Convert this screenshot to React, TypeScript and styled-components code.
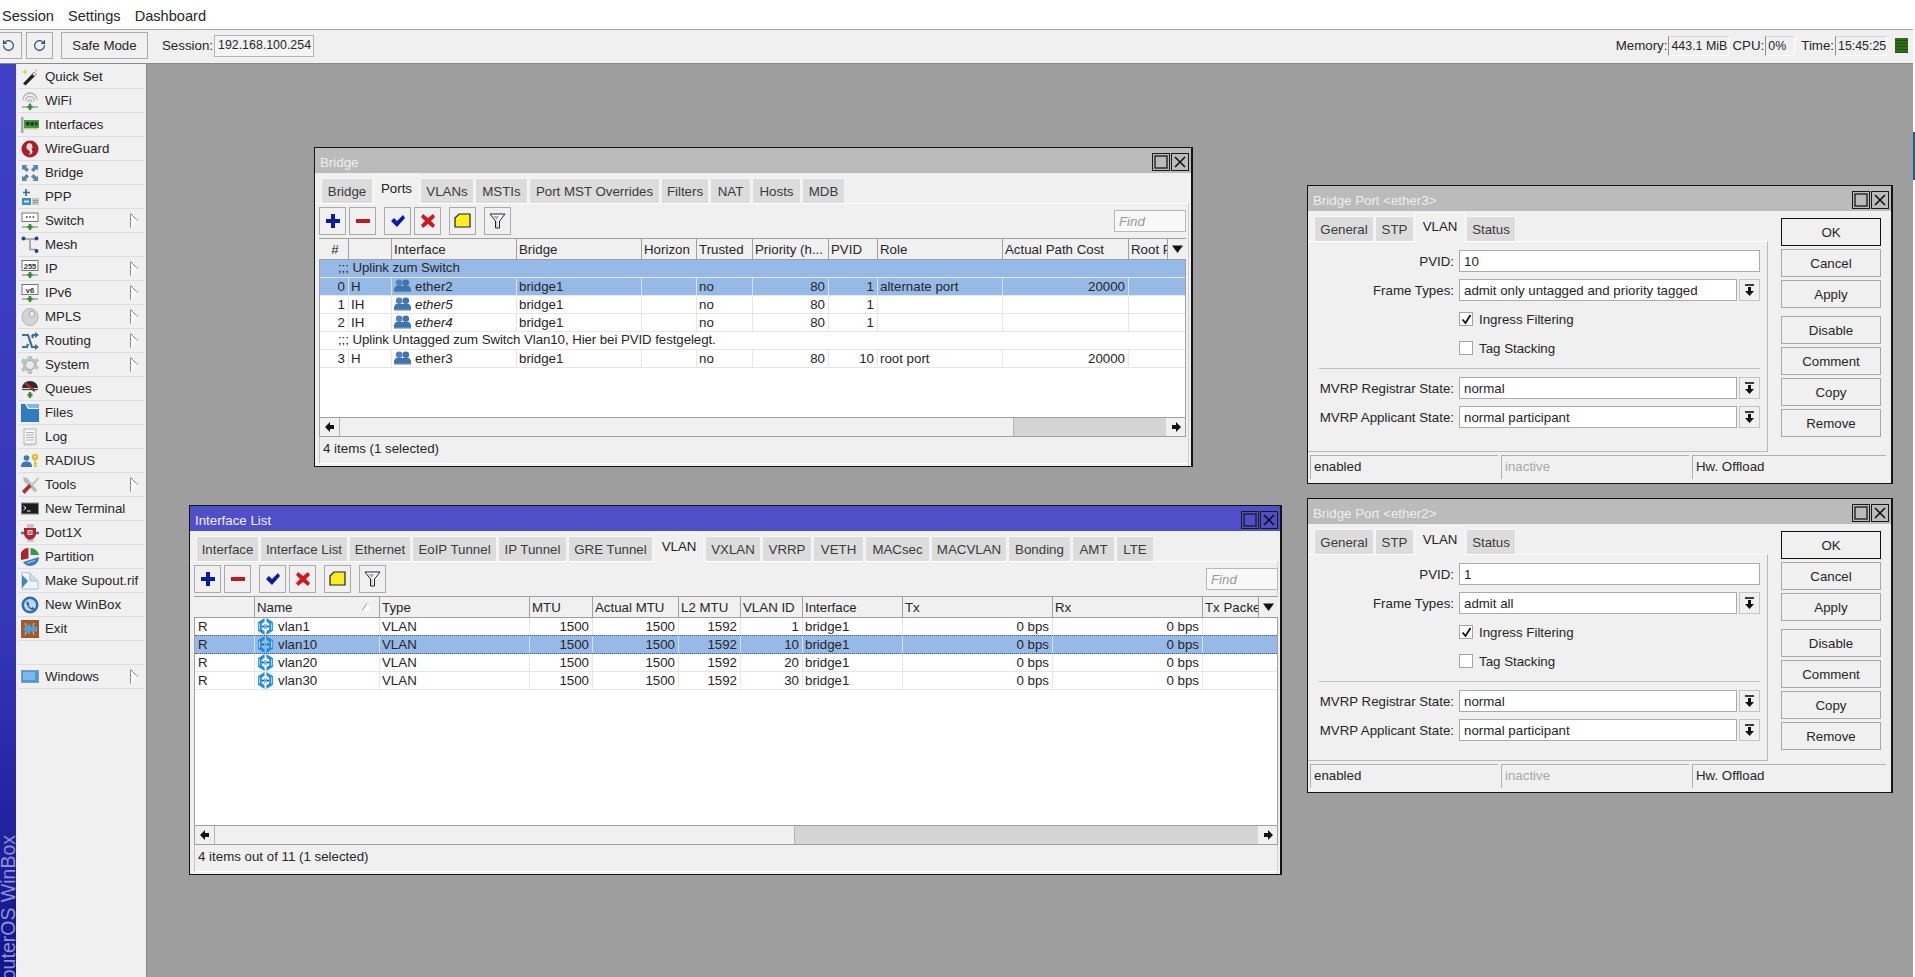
import React from "react";
import styled, { createGlobalStyle } from "styled-components";
import { RotateCcw, RotateCw } from "lucide-react";

const GlobalStyle = createGlobalStyle`
  html, body {
    margin: 0;
    padding: 0;
    background: #fff;
    overflow: hidden;
  }
  * { box-sizing: border-box; }
  body {
    font-family: "Liberation Sans", Arial, sans-serif;
    font-size: 13.3px;
    color: #262626;
  }
`;

const Page = styled.div`
  display: flex;
  width: 1915px;
  height: 977px;
  overflow: hidden;
`;

const Frame = styled.div`
  flex: 1;
  min-width: 0;
  display: flex;
  flex-direction: column;
`;

const EdgeStrip = styled.div`
  width: 2px;
  padding-top: 132px;
  background: #fff;
`;

const EdgeMark = styled.div`
  height: 48px;
  background: #1f5f8f;
`;

const MenuBar = styled.div`
  height: 30px;
  flex: none;
  display: flex;
  align-items: center;
  gap: 14px;
  padding: 3px 0 0 2px;
  background: #fff;
  border-bottom: 1px solid #a8a8a8;
  font-size: 14.6px;
`;

const TopBar = styled.div`
  height: 34px;
  flex: none;
  display: flex;
  align-items: center;
  padding: 0 5px 2px 0;
  background: #f0f0f0;
  border-bottom: 1px solid #8a8a8a;
`;

const TopButton = styled.div<{ $w: number; $after?: number }>`
  width: ${(p) => p.$w}px;
  height: 27px;
  flex: none;
  display: flex;
  align-items: center;
  justify-content: center;
  margin-right: ${(p) => p.$after ?? 4}px;
  border: 1px solid #ababab;
  background: #f0f0f0;
  color: #1d3b7a;
  &:first-child { margin-left: -5px; }
`;

const SafeButton = styled(TopButton)`
  color: #262626;
`;

const TopLabel = styled.span<{ $before?: number }>`
  margin-left: ${(p) => p.$before ?? 0}px;
  margin-right: 1px;
`;

const SessionField = styled.div`
  width: 100px;
  height: 22px;
  line-height: 19px;
  padding-left: 3px;
  font-size: 12.4px;
  border: 1px solid #b4b4b4;
  background: #f4f4f4;
  white-space: nowrap;
`;

const InfoGroup = styled.div`
  margin-left: auto;
  display: flex;
  align-items: center;
`;

const InfoField = styled.div<{ $w: number; $after?: number }>`
  width: ${(p) => p.$w}px;
  height: 20px;
  line-height: 18px;
  padding-left: 2px;
  font-size: 12.4px;
  margin-right: ${(p) => p.$after ?? 6}px;
  border-left: 1px solid #8e8e8e;
  border-top: 1px solid #d4d4d4;
  border-right: 1px solid #fff;
  border-bottom: 1px solid #fff;
  white-space: nowrap;
`;

const Led = styled.div`
  width: 13px;
  height: 15px;
  margin-left: 2px;
  background: repeating-linear-gradient(#2f6b1a 0 2px, #23540f 2px 3px);
`;

const Workspace = styled.div`
  flex: 1;
  min-height: 0;
  display: flex;
`;

const SideStrip = styled.div`
  width: 16px;
  flex: none;
  display: flex;
  flex-direction: column;
  justify-content: flex-end;
  align-items: center;
  overflow: hidden;
  background: linear-gradient(#4040c4, #3535b8 62%, #13138c);
`;

const SideTitle = styled.div`
  writing-mode: vertical-rl;
  transform: rotate(180deg);
  flex: none;
  margin-bottom: -17px;
  font-size: 19.5px;
  line-height: 16px;
  white-space: nowrap;
  color: #8c92d2;
`;

const SidePanel = styled.nav`
  width: 131px;
  flex: none;
  padding: 1px 2px 0 2px;
  background: #f0f0f0;
  border-right: 1px solid #8a8a8a;
`;

const MenuRow = styled.div`
  height: 24px;
  display: flex;
  align-items: center;
  gap: 6px;
  padding-left: 3px;
  border-bottom: 1px solid #dedede;
  white-space: nowrap;
`;

const SubArrow = styled.svg`
  margin-left: auto;
  margin-right: 6px;
  flex: none;
`;

const Desktop = styled.main`
  flex: 1;
  position: relative;
  background: #9e9e9e;
`;

const Win = styled.section<{ $x: number; $y: number; $w: number; $h: number }>`
  position: absolute;
  left: ${(p) => p.$x}px;
  top: ${(p) => p.$y}px;
  width: ${(p) => p.$w}px;
  height: ${(p) => p.$h}px;
  display: flex;
  flex-direction: column;
  background: #f0f0f0;
  border: 1px solid #141414;
  border-right-width: 2px;
`;

const TitleBar = styled.header<{ $active?: boolean }>`
  height: 25px;
  flex: none;
  display: flex;
  align-items: center;
  justify-content: space-between;
  padding: 3px 2px 0 5px;
  background: ${(p) => (p.$active ? "#4f4fc8" : "#bbbbbb")};
  color: ${(p) => (p.$active ? "#f0f0ff" : "#eeeeee")};
`;

const TitleButtons = styled.div`
  display: flex;
  gap: 1px;
`;

const TitleButton = styled.div`
  width: 18px;
  height: 18px;
  display: flex;
  align-items: center;
  justify-content: center;
  border: 1px solid #1a1a1a;
`;

const TabRow = styled.div`
  height: 28px;
  flex: none;
  margin-top: 2px;
  display: flex;
  align-items: flex-end;
  gap: 1px;
  padding-left: 6px;
  position: relative;
  z-index: 1;
`;

const Tab = styled.div<{ $w: number; $on?: boolean }>`
  width: ${(p) => p.$w}px;
  height: ${(p) => (p.$on ? 29 : 25)}px;
  flex: none;
  display: flex;
  align-items: center;
  justify-content: center;
  white-space: nowrap;
  color: ${(p) => (p.$on ? "#222" : "#3a3a3a")};
  background: ${(p) => (p.$on ? "#f0f0f0" : "#dcdcdc")};
  border: 1px solid #f6f6f6;
  border-bottom: none;
  padding-bottom: ${(p) => (p.$on ? 4 : 0)}px;
  margin-bottom: ${(p) => (p.$on ? -1 : 0)}px;
`;

const ListPanel = styled.div`
  flex: 1;
  min-height: 0;
  display: flex;
  flex-direction: column;
  margin-right: 2px;
  border-top: 1px solid #fff;
  border-right: 1px solid #d0d0d0;
`;

const ListBody = styled.div`
  flex: 1;
  min-height: 0;
  width: max-content;
  display: flex;
  flex-direction: column;
  margin-left: 4px;
`;

const ToolRow = styled.div`
  height: 28px;
  flex: none;
  margin-top: 3px;
  display: flex;
  align-items: center;
`;

const ToolButton = styled.div<{ $after?: number }>`
  width: 27px;
  height: 28px;
  flex: none;
  display: flex;
  align-items: center;
  justify-content: center;
  margin-right: ${(p) => p.$after ?? 3}px;
  border: 1px solid #aaaaaa;
  background: #f0f0f0;
`;

const FindBox = styled.div`
  margin-left: auto;
  width: 72px;
  height: 22px;
  line-height: 21px;
  padding-left: 4px;
  font-style: italic;
  color: #9a9a9a;
  background: #f8f8f8;
  border: 1px solid #b8b8b8;
`;

const Table = styled.div`
  flex: 1;
  min-height: 0;
  margin-top: 3px;
  display: flex;
  flex-direction: column;
  background: #fff;
  border-left: 1px solid #a0a0a0;
  border-right: 1px solid #a0a0a0;
  border-bottom: 1px solid #a0a0a0;
`;

const HeadRow = styled.div<{ $cols: string }>`
  height: 22px;
  flex: none;
  display: grid;
  grid-template-columns: ${(p) => p.$cols};
  margin-left: -1px;
  margin-right: -1px;
  background: #f0f0f0;
  border-top: 1px solid #a0a0a0;
  border-bottom: 1px solid #a0a0a0;
`;

const HeadCell = styled.div<{ $center?: boolean }>`
  position: relative;
  padding: 0 0 0 2px;
  line-height: 21px;
  overflow: hidden;
  white-space: nowrap;
  text-align: ${(p) => (p.$center ? "center" : "left")};
  border-left: 1px solid #a0a0a0;
  &:first-child { border-left-color: transparent; }
`;

const SortMark = styled.svg`
  position: absolute;
  right: 8px;
  top: 5px;
`;

const MoreCell = styled(HeadCell)`
  display: flex;
  align-items: center;
  justify-content: center;
  padding: 0;
`;

const Rows = styled.div`
  flex: 1;
  min-height: 0;
`;

const Row = styled.div<{ $cols?: string; $sel?: boolean; $dotted?: boolean }>`
  display: ${(p) => (p.$cols ? "grid" : "block")};
  grid-template-columns: ${(p) => p.$cols ?? "none"};
  line-height: 16px;
  white-space: nowrap;
  background: ${(p) => (p.$sel ? "#97b9e7" : "#fff")};
  border-bottom: 1px ${(p) => (p.$dotted ? "dotted #4a5a74" : "solid #e6e6e6")};
  border-top: ${(p) => (p.$dotted ? "1px dotted #4a5a74" : "none")};
  margin-top: ${(p) => (p.$dotted ? -1 : 0)}px;
  height: ${(p) => (p.$dotted ? 19 : 18)}px;
`;

const CommentText = styled.div`
  padding-left: 18px;
  letter-spacing: -0.08px;
`;

const Cell = styled.div<{ $right?: boolean; $sel?: boolean; $italic?: boolean }>`
  display: flex;
  align-items: center;
  justify-content: ${(p) => (p.$right ? "flex-end" : "flex-start")};
  gap: 4px;
  padding: 0 3px 0 2px;
  overflow: hidden;
  font-style: ${(p) => (p.$italic ? "italic" : "normal")};
  border-left: 1px solid ${(p) => (p.$sel ? "#d4e2f6" : "#e6e6e6")};
  &:first-child { border-left-color: transparent; }
`;

const ScrollBar = styled.div`
  height: 19px;
  flex: none;
  display: flex;
  background: #d4d4d4;
  border-top: 1px solid #a0a0a0;
`;

const ScrollStep = styled.div`
  width: 19px;
  flex: none;
  display: flex;
  align-items: center;
  justify-content: center;
  background: #f0f0f0;
`;

const ScrollThumb = styled.div<{ $w: number }>`
  width: ${(p) => p.$w}px;
  flex: none;
  background: #f0f0f0;
  border-left: 1px solid #b4b4b4;
  border-right: 1px solid #b4b4b4;
`;

const ScrollGap = styled.div`
  flex: 1;
`;

const ListStatus = styled.div`
  height: 27px;
  flex: none;
  line-height: 23px;
  padding-left: 3px;
  margin: 0 0 2px 0;
  border-left: 1px solid #c4c4c4;
  border-bottom: 1px solid #fff;
`;

const FormLayout = styled.div`
  flex: 1;
  min-height: 0;
  display: flex;
`;

const FormLeft = styled.div`
  width: 460px;
  flex: none;
  display: flex;
  flex-direction: column;
`;

const FormPanel = styled.div`
  flex: 1;
  min-height: 0;
  padding: 8px 7px 0 0;
  display: flex;
  flex-direction: column;
  gap: 7px;
  border-top: 1px solid #fff;
  border-right: 1px solid #b8b8b8;
  border-bottom: 1px solid #b8b8b8;
`;

const FormRow = styled.div`
  height: 22px;
  flex: none;
  display: grid;
  grid-template-columns: 146px 1fr;
  column-gap: 5px;
  align-items: center;
`;

const FormLabel = styled.div`
  text-align: right;
  white-space: nowrap;
`;

const ComboWrap = styled.div`
  display: flex;
  gap: 2px;
  height: 22px;
`;

const FieldBox = styled.div`
  flex: 1;
  height: 22px;
  line-height: 21px;
  padding-left: 4px;
  background: #fff;
  border: 1px solid #ababab;
  white-space: nowrap;
`;

const ComboButton = styled.div`
  width: 21px;
  flex: none;
  display: flex;
  align-items: center;
  justify-content: center;
  border: 1px solid #c4c4c4;
  background: #f0f0f0;
`;

const CheckRow = styled.div`
  display: flex;
  align-items: center;
  gap: 6px;
`;

const CheckBox = styled.div`
  width: 14px;
  height: 14px;
  flex: none;
  display: flex;
  align-items: center;
  justify-content: center;
  background: #fff;
  border: 1px solid #a4a4a4;
`;

const Divider = styled.div`
  height: 1px;
  flex: none;
  margin: 2px 0 1px 11px;
  background: #c0c0c0;
`;

const ButtonColumn = styled.div`
  width: 100px;
  flex: none;
  margin: 7px 0 0 13px;
  display: flex;
  flex-direction: column;
  gap: 3px;
`;

const FormButton = styled.div<{ $main?: boolean; $split?: boolean }>`
  height: 28px;
  flex: none;
  display: flex;
  align-items: center;
  justify-content: center;
  margin-top: ${(p) => (p.$split ? 5 : 0)}px;
  background: #f0f0f0;
  border: 1px solid ${(p) => (p.$main ? "#111" : "#a8a8a8")};
`;

const FormStatus = styled.div`
  height: 24px;
  flex: none;
  margin: 3px 0 4px 2px;
  display: grid;
  grid-template-columns: 188px 188px 194px;
  column-gap: 3px;
`;

const StatusCell = styled.div<{ $dim?: boolean }>`
  line-height: 22px;
  padding-left: 3px;
  color: ${(p) => (p.$dim ? "#a8a8a8" : "#262626")};
  border-left: 1px solid #b0b0b0;
  border-top: 1px solid #b0b0b0;
`;

const IconSvg = styled.svg`
  flex: none;
`;

const StepIcon = styled.svg<{ $flip?: boolean }>`
  transform: ${(p) => (p.$flip ? "scaleX(-1)" : "none")};
`;

type IconProps = { children: React.ReactNode; size?: number };

const Ico = ({ children, size = 18 }: IconProps) => (
  <IconSvg width={size} height={size} viewBox="0 0 18 18">
    {children}
  </IconSvg>
);

const NetBase = () => (
  <>
    <path d="M1 15h16" stroke="#8a8a8a" strokeWidth="1.2" />
    <path d="M9 12v6M6.500 15h5" stroke="#2f8f2f" strokeWidth="2.4" />
  </>
);

const menuIcons: Record<string, React.ReactNode> = {
  wand: (
    <>
      <path d="M2 15.500 12 5l2.500 2.500L4.500 17.500z" fill="#222" />
      <path d="M11 6l2-2 2.500 2.500-2 2z" fill="#d8d8d8" stroke="#555" strokeWidth=".5" />
      <path d="M4 1l.8 2.200L7 4l-2.200.8L4 7l-.8-2.200L1 4l2.200-.8z" fill="#d4d820" />
      <circle cx="15" cy="2.500" r="1" fill="#c8cc30" />
    </>
  ),
  wifi: (
    <>
      <path d="M2 8a7 7 0 0 1 14 0M4.500 9a4.500 4.500 0 0 1 9 0M7 10a2 2 0 0 1 4 0" fill="none" stroke="#b4b4b4" strokeWidth="1.3" />
      <path d="M9 10v3" stroke="#a0a0a0" />
      <NetBase />
    </>
  ),
  card: (
    <>
      <rect x="0" y="1" width="2.500" height="16" fill="#a8a8a8" />
      <rect x="3" y="4" width="15" height="8" fill="#3f9a3a" />
      <rect x="5" y="6" width="3.500" height="3.500" fill="#1f3f24" />
      <rect x="9.500" y="6" width="3.500" height="3.500" fill="#1f3f24" />
      <rect x="14" y="6" width="2.500" height="3.500" fill="#1f3f24" />
      <path d="M4 12v1.500M6 12v1.500M8 12v1.500M10 12v1.500M12 12v1.500M14 12v1.500M16 12v1.500" stroke="#c4a030" />
    </>
  ),
  wireguard: (
    <>
      <circle cx="9" cy="9" r="8.500" fill="#a81e2a" />
      <path d="M7 3.500c3-1 5 1 4 3l1.500 1-2 .5 1 3.500c0 2-2 3.500-4 3 1.500-1 2-2 1-3.500L6 9c-1-2-.5-4.500 1-5.500z" fill="#f0dcdc" />
    </>
  ),
  bridge: (
    <path
      d="M1 1h5.500L5 2.500 8 5.500 5.500 8 2.500 5 1 6.500zM17 1v5.500L15.500 5l-3 3L10 5.500l3-3L11.500 1zM1 17v-5.500L2.500 13l3-3L8 12.500l-3 3L6.500 17zM17 17h-5.500l1.500-1.500-3-3 2.500-2.500 3 3 1.500-1.500z"
      fill="#5a86aa"
    />
  ),
  ppp: (
    <>
      <path d="M5 1v7M2 4.500h7" stroke="#3a6a90" strokeWidth="1.600" />
      <rect x="1" y="10" width="9" height="7" fill="#3d8ccb" />
      <rect x="3" y="12.500" width="5" height="2" fill="#cfe6f8" />
      <rect x="11" y="10" width="7" height="7" fill="#c6c6c6" />
      <path d="M12 12.500h5M12 14.500h5" stroke="#8c9a8c" />
    </>
  ),
  switch: (
    <>
      <rect x="1" y="1" width="16" height="8.500" fill="#fff" stroke="#777" />
      <path d="M5 5h1.500M8.300 5h1.500M11.600 5h1.500" stroke="#333" strokeWidth="1.500" />
      <NetBase />
    </>
  ),
  mesh: (
    <>
      <path d="M2 3h14M9 3v10.500h6" fill="none" stroke="#999" strokeWidth="1.600" />
      <circle cx="2.500" cy="2.500" r="2" fill="#2a3f9a" />
      <circle cx="15.500" cy="2.500" r="2" fill="#2a3f9a" />
      <circle cx="15.500" cy="15" r="2" fill="#2a3f9a" />
    </>
  ),
  ip: (
    <>
      <rect x="1" y="0.500" width="16" height="10" fill="#fff" stroke="#777" />
      <text x="9" y="8.500" fontSize="7.500" textAnchor="middle" fontFamily="Liberation Sans" fontWeight="700" fill="#333">255</text>
      <NetBase />
    </>
  ),
  ipv6: (
    <>
      <rect x="1" y="0.500" width="16" height="10" fill="#fff" stroke="#777" />
      <text x="9" y="8.500" fontSize="7.500" textAnchor="middle" fontFamily="Liberation Sans" fontWeight="700" fill="#333">v6</text>
      <NetBase />
    </>
  ),
  mpls: (
    <>
      <ellipse cx="9" cy="9" rx="8" ry="8.500" fill="#d4d4d4" stroke="#b0b0b0" />
      <ellipse cx="11" cy="6" rx="2.500" ry="3" fill="#efefef" stroke="#a8a8a8" />
    </>
  ),
  routing: (
    <>
      <path d="M1 3h6l4 12h5M1 15h5l1-3M11 3h5M12 6l-1-3" fill="none" stroke="#3e6e94" strokeWidth="2.200" />
      <path d="M14 0l4 3-4 3zM14 12l4 3-4 3z" fill="#3e6e94" />
    </>
  ),
  system: (
    <>
      <path d="M7 0h4l.5 2.500 2.500 1 2-1.500 2 3-2 1.500v3l2 1.500-2 3-2-1.500-2.500 1L11 18H7l-.5-2.500-2.500-1-2 1.500-2-3 2-1.500v-3L0 5l2-3 2 1.500 2.500-1z" fill="#bdc4bd" />
      <circle cx="9" cy="9" r="4.500" fill="#ebebeb" stroke="#a8b0a8" />
    </>
  ),
  queues: (
    <>
      <path d="M1 8a8 7 0 0 1 16 0z" fill="#2c2c2c" />
      <path d="M4 3l10 8" stroke="#b82a34" strokeWidth="2.400" />
      <path d="M1 9.500h16" stroke="#444" strokeWidth="1.200" />
      <path d="M9 12v6M6.500 15h5" stroke="#2f8f2f" strokeWidth="2.400" />
    </>
  ),
  folder: (
    <>
      <path d="M0 0h4l3 5h11v13H0z" fill="#2f7cc0" />
      <path d="M5.500 0H18v4H8z" fill="#7fb8e4" />
    </>
  ),
  log: (
    <>
      <rect x="3" y="1" width="12" height="15" fill="#f6f6f6" stroke="#b4b4b4" />
      <path d="M5 4.500h8M5 7h8M5 9.500h8M5 12h8" stroke="#b4b4b4" />
      <path d="M4 16v2M7 16v2M10 16v2M13 16v2" stroke="#b4b4b4" />
    </>
  ),
  radius: (
    <>
      <circle cx="5.500" cy="6" r="2.800" fill="#3a78b8" />
      <path d="M0 15c0-4 2-5.500 5.500-5.500S11 11 11 15z" fill="#3a78b8" />
      <circle cx="14" cy="5" r="3.200" fill="#e0c028" />
      <circle cx="14" cy="4.500" r="1" fill="#f8f0c0" />
      <path d="M14 8v7M14 11.500h2M14 14h2" stroke="#e0c028" strokeWidth="1.500" />
    </>
  ),
  tools: (
    <>
      <path d="M2 1l4 1 10 12-2 2.500L3 5.500z" fill="#b8b8b8" />
      <path d="M17 1l-7 7.500 1.500 1.500L18 3z" fill="#c4c4c4" />
      <path d="M1 15l7-7 2.500 2.500-7 7.500z" fill="#b02a34" />
    </>
  ),
  terminal: (
    <>
      <rect x="0.500" y="3" width="17" height="11" fill="#1c1c1c" stroke="#8a8a8a" />
      <path d="M2.500 6l2.500 2-2.500 2" fill="none" stroke="#fff" />
      <path d="M6 11h3.500" stroke="#fff" />
    </>
  ),
  dot1x: (
    <>
      <rect x="6" y="0" width="7" height="18" fill="#c8c8c8" />
      <path d="M0 9h4M14 9h4" stroke="#3a78b8" strokeWidth="2.500" />
      <path d="M3 4h12v5c0 4-3 6-6 7-3-1-6-3-6-7z" fill="#b0222e" />
      <rect x="6.500" y="6" width="5" height="5" fill="#f4d8dc" />
      <path d="M7.500 7l3 3M10.500 7l-3 3" stroke="#b0222e" />
    </>
  ),
  partition: (
    <>
      <path d="M7.500 0v10.500L0 12V5C1 2 4 0 7.500 0z" fill="#b0222e" />
      <path d="M9.500 0c4 0 7.500 3 8.500 7H9.500z" fill="#2f9a4a" />
      <path d="M2 14l16-5c0 5-4 9-9 9-3 0-5-1.500-7-4z" fill="#3a7cc0" />
      <path d="M6 15l8-2.500" stroke="#bcd8f0" />
    </>
  ),
  supout: (
    <>
      <path d="M1 0l8 1 8 8v8H1z" fill="#eef4fa" stroke="#a8c0d4" />
      <path d="M1 3l6 6-6 7z" fill="#3a88c0" />
      <path d="M9 1v8h8" fill="#c8dcec" stroke="#a8c0d4" />
    </>
  ),
  winbox: (
    <>
      <circle cx="9" cy="9" r="8.500" fill="#2d6fae" />
      <circle cx="9" cy="9" r="6" fill="#bcd6ee" />
      <path d="M6 5c-1 2 0 5 2 7s5 2.500 6 1l-2.500-2-1 1c-1 0-3-2-3-3l1-1z" fill="#1f5a96" />
    </>
  ),
  exit: (
    <>
      <rect width="18" height="18" fill="#a05a2c" />
      <path d="M4 3l2 6-2 6M13 3l-2 6 2 6" stroke="#e0c0a0" fill="none" />
      <path d="M2 9l7-6v3.500h7v5H9V15z" fill="#49a0dc" />
    </>
  ),
  windows: (
    <>
      <rect x="0.500" y="2.500" width="17" height="12" fill="#4b9ad8" stroke="#8a9aa8" />
      <rect x="2" y="4" width="12" height="8" fill="#78b8ea" />
    </>
  ),
};

const sideMenu: { label: string; icon?: string; more?: boolean }[] = [
  { label: "Quick Set", icon: "wand" },
  { label: "WiFi", icon: "wifi" },
  { label: "Interfaces", icon: "card" },
  { label: "WireGuard", icon: "wireguard" },
  { label: "Bridge", icon: "bridge" },
  { label: "PPP", icon: "ppp" },
  { label: "Switch", icon: "switch", more: true },
  { label: "Mesh", icon: "mesh" },
  { label: "IP", icon: "ip", more: true },
  { label: "IPv6", icon: "ipv6", more: true },
  { label: "MPLS", icon: "mpls", more: true },
  { label: "Routing", icon: "routing", more: true },
  { label: "System", icon: "system", more: true },
  { label: "Queues", icon: "queues" },
  { label: "Files", icon: "folder" },
  { label: "Log", icon: "log" },
  { label: "RADIUS", icon: "radius" },
  { label: "Tools", icon: "tools", more: true },
  { label: "New Terminal", icon: "terminal" },
  { label: "Dot1X", icon: "dot1x" },
  { label: "Partition", icon: "partition" },
  { label: "Make Supout.rif", icon: "supout" },
  { label: "New WinBox", icon: "winbox" },
  { label: "Exit", icon: "exit" },
  { label: "" },
  { label: "Windows", icon: "windows", more: true },
];

const PortIcon = () => (
  <Ico size={17}>
    <path d="M1.500 8.500h15V12h-15z" fill="#4a7fb5" />
    <circle cx="5.500" cy="5" r="3.500" fill="#4f82b8" />
    <circle cx="12.500" cy="5" r="3.500" fill="#3f74aa" />
    <path d="M0 15v-3c0-2 2-3.500 5.500-3.500h7C16 8.500 18 10 18 12v3z" fill="#3f74ac" />
    <path d="M0 15h18" stroke="#8fb2d4" strokeWidth="1.200" />
  </Ico>
);

const VlanIcon = () => (
  <Ico size={17}>
    <path d="M8 0L1 4.500v9L8 18v-4L5 12V6l3-2z" fill="#1f8fe4" />
    <path d="M10 0l7 4.500v9L10 18v-4l3-2V6l-3-2z" fill="#1f8fe4" />
    <path d="M2.500 5.500v7M15.500 5.500v7" stroke="#a8dcf8" strokeWidth="1.200" />
    <path d="M5 9h8" stroke="#1a5a9c" strokeWidth="1.800" />
    <path d="M8 6v6M10 6v6" stroke="#6fb8ec" strokeWidth="1.200" />
  </Ico>
);

const TitleControls = () => (
  <TitleButtons>
    <TitleButton>
      <svg width="14" height="14" viewBox="0 0 14 14">
        <rect x="1" y="1" width="12" height="12" fill="none" stroke="#222" strokeWidth="1.400" />
      </svg>
    </TitleButton>
    <TitleButton>
      <svg width="14" height="14" viewBox="0 0 14 14">
        <path d="M2 2l10 10M12 2L2 12" stroke="#111" strokeWidth="1.600" />
      </svg>
    </TitleButton>
  </TitleButtons>
);

const ListTools = () => (
  <ToolRow>
    <ToolButton>
      <svg width="16" height="16" viewBox="0 0 16 16">
        <path d="M6 1h4v5h5v4h-5v5H6v-5H1V6h5z" fill="#0a1aa8" />
      </svg>
    </ToolButton>
    <ToolButton $after={8}>
      <svg width="16" height="16" viewBox="0 0 16 16">
        <rect x="1" y="6" width="14" height="4" fill="#b81c24" />
      </svg>
    </ToolButton>
    <ToolButton>
      <svg width="16" height="16" viewBox="0 0 16 16">
        <path d="M1 8l3-3 3 3 6-6 2 3-8 9z" fill="#0a1aa8" />
      </svg>
    </ToolButton>
    <ToolButton $after={8}>
      <svg width="16" height="16" viewBox="0 0 16 16">
        <path d="M3 1l5 4 5-4 2 3-4 4 4 4-2 3-5-4-5 4-2-3 4-4-4-4z" fill="#d01820" />
      </svg>
    </ToolButton>
    <ToolButton $after={8}>
      <svg width="17" height="16" viewBox="0 0 17 16">
        <path d="M1 5l4-4h11v13H1z" fill="#f6f020" stroke="#222" strokeWidth="1.200" />
      </svg>
    </ToolButton>
    <ToolButton>
      <svg width="17" height="18" viewBox="0 0 17 18">
        <path d="M1 2h15l-5.500 7v7h-4V9z" fill="#fff" stroke="#222" />
        <path d="M4 4h6l-2 4z" fill="#8fb4d8" />
        <path d="M8 9v6" stroke="#9ab" />
      </svg>
    </ToolButton>
    <FindBox>Find</FindBox>
  </ToolRow>
);

const DropArrow = () => (
  <svg width="11" height="9" viewBox="0 0 11 9">
    <path d="M0 0l5.500 7.500L11 0z" fill="#111" transform="translate(0 .5)" />
  </svg>
);

const StepArrow = ({ flip }: { flip?: boolean }) => (
  <StepIcon width="10" height="10" viewBox="0 0 10 10" $flip={flip}>
    <path d="M0 5l5-5v3h4v4H5v3z" fill="#111" />
  </StepIcon>
);

type ColDef = { title: React.ReactNode; center?: boolean };

type ListRow =
  | { comment: string }
  | { cells: React.ReactNode[]; right: number[]; sel?: boolean; dotted?: boolean; italicAt?: number };

type ListWinProps = {
  x: number;
  y: number;
  w: number;
  h: number;
  title: string;
  active?: boolean;
  tabs: { label: string; w: number; on?: boolean }[];
  cols: string;
  rowCols: string;
  heads: ColDef[];
  rows: ListRow[];
  selComment?: number;
  thumb: number;
  status: string;
};

const ListWindow = (p: ListWinProps) => (
  <Win $x={p.x} $y={p.y} $w={p.w} $h={p.h}>
    <TitleBar $active={p.active}>
      <span>{p.title}</span>
      <TitleControls />
    </TitleBar>
    <TabRow>
      {p.tabs.map((t) => (
        <Tab key={t.label} $w={t.w} $on={t.on}>
          {t.label}
        </Tab>
      ))}
    </TabRow>
    <ListPanel>
      <ListBody>
        <ListTools />
        <Table>
          <HeadRow $cols={p.cols}>
            {p.heads.map((c, i) => (
              <HeadCell key={i} $center={c.center}>
                {c.title}
              </HeadCell>
            ))}
            <MoreCell>
              <DropArrow />
            </MoreCell>
          </HeadRow>
          <Rows>
            {p.rows.map((r, i) =>
              "comment" in r ? (
                <Row key={i} $sel={p.selComment === i}>
                  <CommentText>{r.comment}</CommentText>
                </Row>
              ) : (
                <Row key={i} $cols={p.rowCols} $sel={r.sel} $dotted={r.dotted}>
                  {r.cells.map((c, j) => (
                    <Cell key={j} $right={r.right.includes(j)} $sel={r.sel} $italic={r.italicAt === j}>
                      {c}
                    </Cell>
                  ))}
                </Row>
              )
            )}
          </Rows>
          <ScrollBar>
            <ScrollStep>
              <StepArrow />
            </ScrollStep>
            <ScrollThumb $w={p.thumb} />
            <ScrollGap />
            <ScrollStep>
              <StepArrow flip />
            </ScrollStep>
          </ScrollBar>
        </Table>
        <ListStatus>{p.status}</ListStatus>
      </ListBody>
    </ListPanel>
  </Win>
);

const SelectArrow = () => (
  <svg width="11" height="13" viewBox="0 0 11 13">
    <path d="M1 1h9" stroke="#111" strokeWidth="1.600" />
    <path d="M4 3h3v4h3l-4.500 5L1 7h3z" fill="#111" />
  </svg>
);

const Combo = ({ value }: { value: string }) => (
  <ComboWrap>
    <FieldBox>{value}</FieldBox>
    <ComboButton>
      <SelectArrow />
    </ComboButton>
  </ComboWrap>
);

const Check = ({ label, checked }: { label: string; checked?: boolean }) => (
  <FormRow>
    <span />
    <CheckRow>
      <CheckBox>
        {checked && (
          <svg width="11" height="11" viewBox="0 0 11 11">
            <path d="M1.500 5.500l3 3.500 5-8" fill="none" stroke="#111" strokeWidth="1.800" />
          </svg>
        )}
      </CheckBox>
      {label}
    </CheckRow>
  </FormRow>
);

const PortWindow = ({ y, h, title, pvid, frames }: { y: number; h: number; title: string; pvid: string; frames: string }) => (
  <Win $x={1160} $y={y} $w={586} $h={h}>
    <TitleBar>
      <span>{title}</span>
      <TitleControls />
    </TitleBar>
    <FormLayout>
      <FormLeft>
        <TabRow>
          <Tab $w={60}>General</Tab>
          <Tab $w={39}>STP</Tab>
          <Tab $w={50} $on>
            VLAN
          </Tab>
          <Tab $w={50}>Status</Tab>
        </TabRow>
        <FormPanel>
          <FormRow>
            <FormLabel>PVID:</FormLabel>
            <FieldBox>{pvid}</FieldBox>
          </FormRow>
          <FormRow>
            <FormLabel>Frame Types:</FormLabel>
            <Combo value={frames} />
          </FormRow>
          <Check label="Ingress Filtering" checked />
          <Check label="Tag Stacking" />
          <Divider />
          <FormRow>
            <FormLabel>MVRP Registrar State:</FormLabel>
            <Combo value="normal" />
          </FormRow>
          <FormRow>
            <FormLabel>MVRP Applicant State:</FormLabel>
            <Combo value="normal participant" />
          </FormRow>
        </FormPanel>
      </FormLeft>
      <ButtonColumn>
        <FormButton $main>OK</FormButton>
        <FormButton>Cancel</FormButton>
        <FormButton>Apply</FormButton>
        <FormButton $split>Disable</FormButton>
        <FormButton>Comment</FormButton>
        <FormButton>Copy</FormButton>
        <FormButton>Remove</FormButton>
      </ButtonColumn>
    </FormLayout>
    <FormStatus>
      <StatusCell>enabled</StatusCell>
      <StatusCell $dim>inactive</StatusCell>
      <StatusCell>Hw. Offload</StatusCell>
    </FormStatus>
  </Win>
);

const portText = (name: string) => (
  <>
    <PortIcon />
    {name}
  </>
);

const vlanText = (name: string) => (
  <>
    <VlanIcon />
    {name}
  </>
);

const portRight = [0, 6, 7, 9];

const portRow = (
  n: string,
  flag: string,
  name: string,
  pvid: string,
  role: string,
  cost: string,
  extra: { sel?: boolean; italicAt?: number } = {}
): ListRow => ({
  cells: [n, flag, portText(name), "bridge1", "", "no", "80", pvid, role, cost, ""],
  right: portRight,
  ...extra,
});

const bridgeTabs = [
  { label: "Bridge", w: 52 },
  { label: "Ports", w: 45, on: true },
  { label: "VLANs", w: 54 },
  { label: "MSTIs", w: 53 },
  { label: "Port MST Overrides", w: 131 },
  { label: "Filters", w: 48 },
  { label: "NAT", w: 41 },
  { label: "Hosts", w: 49 },
  { label: "MDB", w: 43 },
];

const ifaceTabs = [
  { label: "Interface", w: 63 },
  { label: "Interface List", w: 88 },
  { label: "Ethernet", w: 62 },
  { label: "EoIP Tunnel", w: 85 },
  { label: "IP Tunnel", w: 69 },
  { label: "GRE Tunnel", w: 85 },
  { label: "VLAN", w: 50, on: true },
  { label: "VXLAN", w: 56 },
  { label: "VRRP", w: 50 },
  { label: "VETH", w: 51 },
  { label: "MACsec", w: 65 },
  { label: "MACVLAN", w: 76 },
  { label: "Bonding", w: 63 },
  { label: "AMT", w: 43 },
  { label: "LTE", w: 38 },
];

const ifaceRow = (name: string, id: string, extra: { sel?: boolean; dotted?: boolean } = {}): ListRow => ({
  cells: ["R", vlanText(name), "VLAN", "1500", "1500", "1592", id, "bridge1", "0 bps", "0 bps", ""],
  right: [3, 4, 5, 6, 8, 9],
  ...extra,
});

const App = () => (
  <>
    <GlobalStyle />
    <Page>
      <Frame>
        <MenuBar>
          <span>Session</span>
          <span>Settings</span>
          <span>Dashboard</span>
        </MenuBar>
        <TopBar>
          <TopButton $w={27}>
            <RotateCcw size={13} strokeWidth={2} />
          </TopButton>
          <TopButton $w={27} $after={8}>
            <RotateCw size={13} strokeWidth={2} />
          </TopButton>
          <SafeButton $w={87}>Safe Mode</SafeButton>
          <TopLabel $before={10}>Session:</TopLabel>
          <SessionField>192.168.100.254</SessionField>
          <InfoGroup>
            <TopLabel>Memory:</TopLabel>
            <InfoField $w={61} $after={3}>
              443.1 MiB
            </InfoField>
            <TopLabel>CPU:</TopLabel>
            <InfoField $w={30}>0%</InfoField>
            <TopLabel>Time:</TopLabel>
            <InfoField $w={52}>15:45:25</InfoField>
            <Led />
          </InfoGroup>
        </TopBar>
        <Workspace>
          <SideStrip>
            <SideTitle>RouterOS WinBox</SideTitle>
          </SideStrip>
          <SidePanel>
            {sideMenu.map((m, i) => (
              <MenuRow key={i}>
                {m.icon && <Ico>{menuIcons[m.icon]}</Ico>}
                {m.label}
                {m.more && (
                  <SubArrow width="8" height="15" viewBox="0 0 8 15">
                    <path d="M.5.500v14L7.500 7.500z" fill="#fff" />
                    <path d="M.5 14.500V.5l7 7" fill="none" stroke="#8c8c8c" />
                  </SubArrow>
                )}
              </MenuRow>
            ))}
          </SidePanel>
          <Desktop>
            <ListWindow
              x={167}
              y={83}
              w={879}
              h={320}
              title="Bridge"
              tabs={bridgeTabs}
              cols="29px 43px 125px 125px 55px 56px 76px 49px 125px 126px 39px 19px"
              rowCols="28px 43px 125px 125px 55px 56px 76px 49px 125px 126px 57px"
              heads={[
                { title: "#", center: true },
                { title: "" },
                { title: "Interface" },
                { title: "Bridge" },
                { title: "Horizon" },
                { title: "Trusted" },
                { title: "Priority (h..." },
                { title: "PVID" },
                { title: "Role" },
                { title: "Actual Path Cost" },
                { title: "Root P" },
              ]}
              selComment={0}
              rows={[
                { comment: ";;; Uplink zum Switch" },
                portRow("0", "H", "ether2", "1", "alternate port", "20000", { sel: true }),
                portRow("1", "IH", "ether5", "1", "", "", { italicAt: 2 }),
                portRow("2", "IH", "ether4", "1", "", "", { italicAt: 2 }),
                { comment: ";;; Uplink Untagged zum Switch Vlan10, Hier bei PVID festgelegt." },
                portRow("3", "H", "ether3", "10", "root port", "20000"),
              ]}
              thumb={675}
              status="4 items (1 selected)"
            />
            <ListWindow
              x={42}
              y={441}
              w={1093}
              h={370}
              title="Interface List"
              active
              tabs={ifaceTabs}
              cols="60px 125px 150px 63px 86px 62px 62px 100px 150px 150px 56px 20px"
              rowCols="59px 125px 150px 63px 86px 62px 62px 100px 150px 150px 75px"
              heads={[
                { title: "" },
                {
                  title: (
                    <>
                      Name
                      <SortMark width="9" height="9" viewBox="0 0 9 9">
                        <path d="M.5 8.500h8L5 1z" fill="#fff" />
                        <path d="M.5 8.500L5 1" stroke="#999" fill="none" />
                      </SortMark>
                    </>
                  ),
                },
                { title: "Type" },
                { title: "MTU" },
                { title: "Actual MTU" },
                { title: "L2 MTU" },
                { title: "VLAN ID" },
                { title: "Interface" },
                { title: "Tx" },
                { title: "Rx" },
                { title: "Tx Packets" },
              ]}
              rows={[
                ifaceRow("vlan1", "1"),
                ifaceRow("vlan10", "10", { sel: true, dotted: true }),
                ifaceRow("vlan20", "20"),
                ifaceRow("vlan30", "30"),
              ]}
              thumb={581}
              status="4 items out of 11 (1 selected)"
            />
            <PortWindow y={121} h={299} title="Bridge Port <ether3>" pvid="10" frames="admit only untagged and priority tagged" />
            <PortWindow y={434} h={295} title="Bridge Port <ether2>" pvid="1" frames="admit all" />
          </Desktop>
        </Workspace>
      </Frame>
      <EdgeStrip>
        <EdgeMark />
      </EdgeStrip>
    </Page>
  </>
);

export default App;
